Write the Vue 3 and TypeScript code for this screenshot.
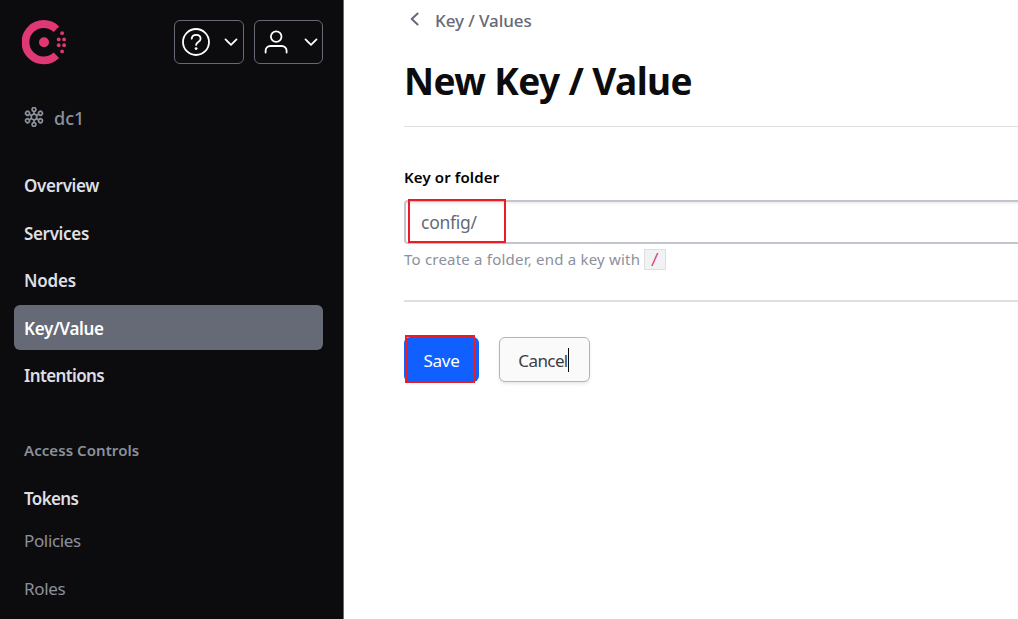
<script setup lang="ts">
import { ref } from 'vue'

interface NavItem {
  label: string
  cls: string
}

const nav: NavItem[] = [
  { label: 'Overview', cls: 'overview' },
  { label: 'Services', cls: 'services' },
  { label: 'Nodes', cls: 'nodes' },
  { label: 'Key/Value', cls: 'kv' },
  { label: 'Intentions', cls: 'intentions' },
]
const active = ref('Key/Value')
const keyName = ref('config/')
const spokes = [0, 60, 120, 180, 240, 300]
</script>

<template>
  <div class="app">
    <aside class="sidebar">
      <header class="top">
        <svg class="logo" width="46" height="46" viewBox="0 0 46 46">
          <path d="M34.4 9.2A18.2 18.2 0 1 0 34.4 35.2" fill="none" stroke="#e03875" stroke-width="7.8" />
          <g fill="#e03875">
            <circle cx="22" cy="22.3" r="5" />
            <circle cx="40.1" cy="13.2" r="1.9" />
            <circle cx="36.7" cy="19.4" r="1.9" />
            <circle cx="42.1" cy="19.4" r="1.9" />
            <circle cx="36.7" cy="25.2" r="1.9" />
            <circle cx="42.1" cy="25.2" r="1.9" />
            <circle cx="40.1" cy="31.4" r="1.9" />
          </g>
        </svg>
        <button class="menu help" aria-label="Help">
          <svg width="68" height="42" viewBox="0 0 68 42">
            <g fill="none" stroke="#fff" stroke-width="1.8" stroke-linecap="round" stroke-linejoin="round">
              <circle cx="21" cy="21" r="13" />
              <path d="M16.7 17.7c.2-2.5 2-3.9 4.4-3.9 2.6 0 4.5 1.6 4.5 3.9 0 3.2-4.5 3.3-4.5 6.2" />
              <path d="M50.5 18.4l5.5 5.4 5.5-5.4" />
            </g>
            <circle cx="21.1" cy="27.6" r="1.4" fill="#fff" />
          </svg>
        </button>
        <button class="menu user" aria-label="Account">
          <svg width="67" height="42" viewBox="0 0 67 42">
            <g fill="none" stroke="#fff" stroke-width="1.8" stroke-linecap="round" stroke-linejoin="round">
              <circle cx="21.2" cy="15.6" r="5.3" />
              <path d="M10.600 31.500v-1.700a4.800 4.800 0 0 1 4.800-4.800h11.400a4.800 4.800 0 0 1 4.800 4.800v1.700" />
              <path d="M50.5 18.4l5.500 5.400 5.500-5.400" />
            </g>
          </svg>
        </button>
      </header>

      <div class="dc">
        <svg width="20" height="20" viewBox="0 0 20 20" fill="none" stroke="#8c909c" stroke-width="1.7">
          <circle cx="10" cy="10" r="2.8" />
          <g v-for="a in spokes" :key="a" :transform="`rotate(${a} 10 10)`">
            <path d="M10 7.2V4.7" />
            <circle cx="10" cy="2.500" r="1.900" />
          </g>
        </svg>
        <span class="dc1">dc1</span>
      </div>

      <nav>
        <a v-for="n in nav" :key="n.label" :class="['item', { active: n.label === active }]" @click="active = n.label">
          <span :class="n.cls">{{ n.label }}</span>
        </a>
      </nav>

      <div class="group"><span class="access">Access Controls</span></div>
      <a class="item tokens-row"><span class="tokens">Tokens</span></a>
      <a class="item sub policies-row"><span class="policies">Policies</span></a>
      <a class="item sub"><span class="roles">Roles</span></a>
    </aside>

    <main>
      <div class="crumb">
        <svg width="11" height="16" viewBox="0 0 11 16">
          <path d="M8.6 2.5L2.7 8l5.9 5.5" fill="none" stroke="#656a76" stroke-width="2" stroke-linecap="round" stroke-linejoin="round" />
        </svg>
        <span class="crumb-text">Key / Values</span>
      </div>
      <h1><span class="title">New Key / Value</span></h1>
      <form @submit.prevent>
        <div class="label"><span class="label-text">Key or folder</span></div>
        <div class="field">
          <div class="mark"><span class="config">{{ keyName }}</span></div>
        </div>
        <div class="hint"><span class="hint-text">To create a folder, end a key with</span><code>/</code></div>
        <div class="actions">
          <button class="save"><span class="save-text">Save</span></button>
          <button class="cancel"><span class="cancel-text">Cancel</span><i class="caret"></i></button>
        </div>
      </form>
    </main>
  </div>
</template>

<style>
body { margin: 0; overflow: hidden; background: #fff; }
</style>

<style scoped>
* { box-sizing: border-box; }
.app {
  display: flex;
  width: 1018px;
  height: 619px;
  overflow: hidden;
  font-family: "Noto Sans", "Open Sans", sans-serif;
  font-size: 17px;
  white-space: nowrap;
}
button { font: inherit; padding: 0; margin: 0; }
svg { display: block; flex: none; }
.sidebar {
  flex: none;
  width: 344px;
  height: 619px;
  overflow: hidden;
  background: #0c0c0e;
  border-right: 1px solid #656a76;
}
.top { display: flex; padding: 20px 0 0 22px; height: 84px; }
.menu { height: 44px; background: transparent; border: 1px solid #656a76; border-radius: 6px; }
.help { width: 70px; margin-left: 106px; }
.user { width: 69px; margin-left: 10px; }
.dc {
  display: flex;
  align-items: center;
  gap: 10px;
  height: 40px;
  margin: 13px 0 25.4px 24px;
  color: #8c909c;
  font-size: 18px;
  font-weight: 500;
}
.dc1 { padding-top: 2px; }
nav { display: flex; flex-direction: column; gap: 2.5px; }
.item {
  display: flex;
  align-items: center;
  height: 45px;
  margin-left: 14px;
  width: 309px;
  padding-left: 10px;
  border-radius: 6px;
  color: #dedfe3;
  font-weight: 600;
}
.item span { padding-top: 1px; }
.item .services, .item .kv, .item .tokens, .item .roles { padding-top: 2.6px; }
.item .policies { padding-top: 0; }
.item.active { background: #656a76; color: #fff; }
.overview, .services, .kv { letter-spacing: -0.34px; }
.nodes { letter-spacing: -0.2px; }
.intentions { letter-spacing: -0.62px; }
.tokens { letter-spacing: -0.65px; }
.policies, .roles { letter-spacing: -0.36px; }
.group {
  display: flex;
  align-items: center;
  height: 30px;
  margin: 37.6px 0 10px 24px;
  color: #8c909c;
  font-size: 15px;
  font-weight: 600;
  letter-spacing: 0.07px;
}
.item.sub { color: #8c909c; font-weight: 400; }
.tokens-row { height: 45px; }
.policies-row { height: 41px; margin-bottom: 4px; }
main { flex: 1; min-width: 0; padding: 0 0 0 60px; color: #0c0c0e; }
.crumb {
  display: flex;
  align-items: center;
  height: 40px;
  padding-left: 5px;
  color: #656a76;
  font-weight: 500;
  letter-spacing: -0.08px;
}
.crumb svg { margin: -3px 15px 0 0; }
h1 {
  margin: 0;
  height: 87px;
  line-height: 82px;
  font-size: 37px;
  font-weight: 700;
  letter-spacing: -0.6px;
  border-bottom: 1px solid #dedfe3;
}
.label {
  height: 73px;
  padding-top: 39px;
  line-height: 22px;
  font-size: 15px;
  font-weight: 600;
  letter-spacing: 0.12px;
  color: #000;
}
.field {
  width: 700px;
  height: 44px;
  border: 2px solid #c2c5cb;
  border-radius: 4px;
  box-shadow: inset 0 3px 2px -1px #656a761a;
}
.mark {
  width: 98px;
  height: 44px;
  margin: -3px 0 0 2px;
  border: 2px solid #ed1c24;
  padding-left: 11px;
  line-height: 43px;
  color: #656a76;
  font-size: 17.5px;
  letter-spacing: -0.25px;
}
.hint {
  display: flex;
  align-items: center;
  height: 31px;
  color: #8c909c;
  font-size: 15px;
}
.hint-text { width: 240px; padding-bottom: 2px; letter-spacing: 0.21px; }
code {
  width: 22px;
  height: 21px;
  border: 1px solid #dedfe3;
  background: #f1f2f3;
  color: #e03875;
  text-align: center;
  font: 15px/20px "DejaVu Sans Mono", monospace;
}
.actions {
  display: flex;
  gap: 20px;
  margin-top: 25px;
  padding-top: 35px;
  border-top: 2px solid #dedfe3;
}
.save {
  position: relative;
  width: 75px;
  height: 45px;
  padding-top: 2px;
  border: 0;
  border-radius: 6px;
  background: #1060ff;
  color: #fff;
  letter-spacing: -0.3px;
}
.save::after {
  content: "";
  box-sizing: border-box;
  position: absolute;
  left: 1px;
  top: -2px;
  width: 70px;
  height: 48px;
  border: 2px solid #ed1c24;
}
.cancel {
  position: relative;
  width: 91px;
  height: 45px;
  padding: 2px 3px 0 0;
  border: 1px solid #b1b3b8;
  border-radius: 6px;
  background: #fafafa;
  color: #3b3d45;
  letter-spacing: -0.6px;
  box-shadow: 0 2px 3px #656a7626;
}
.caret { position: absolute; left: 68px; top: 10px; width: 1px; height: 24px; background: #0c0c0e; }
</style>
